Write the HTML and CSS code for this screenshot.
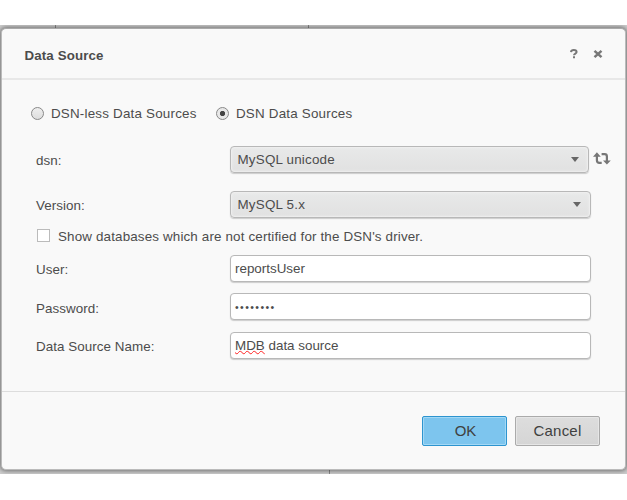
FILE: index.html
```html
<!DOCTYPE html>
<html lang="en">
<head>
<meta charset="utf-8">
<title>Data Source</title>
<link rel="stylesheet" href="styles.css">
</head>
<body>
<div class="backdrop">
  <div class="dialog">
    <header class="header">
      <h1 class="title">Data Source</h1>
      <svg class="help" width="8" height="10" viewBox="0 0 8 10"><path d="M1 3.1C1.2 1.5 2.3 1.1 3.8 1.1C5.5 1.1 6.6 1.8 6.6 3.1C6.6 4.6 4 4.6 4 6.2" fill="none" stroke="#777" stroke-width="2"/><path d="M3 7.3h2v2H3z" fill="#777"/></svg>
      <svg class="close" width="10" height="10" viewBox="0 0 10 10"><path d="M1.5 1.8L8.5 8.2M8.5 1.8L1.5 8.2" stroke="#777" stroke-width="2.5"/></svg>
    </header>
    <main class="content">
      <div class="modes">
        <label class="mode less"><span class="radio"></span><span class="mode-text">DSN-less Data Sources</span></label>
        <label class="mode"><span class="radio on"></span><span class="mode-text">DSN Data Sources</span></label>
      </div>
      <div class="row row-dsn">
        <span class="label">dsn:</span>
        <div class="field select narrow"><span>MySQL unicode</span><i class="arrow"></i></div>
        <svg class="refresh" width="18" height="13" viewBox="0 0 18 13"><g fill="none" stroke="#777" stroke-width="2.2"><path d="M3.9 3v5.2q0 2.6 2.6 2.6h2.2M8.6 2.1h3q2.3 0 2.3 2.3V10"/></g><path d="M0 4.7L3.9.3l3.9 4.4zM10 8.6h7.8l-3.9 4z" fill="#777"/></svg>
      </div>
      <div class="row row-version">
        <span class="label">Version:</span>
        <div class="field select"><span>MySQL 5.x</span><i class="arrow"></i></div>
      </div>
      <label class="check"><span class="box"></span><span class="check-text">Show databases which are not certified for the DSN's driver.</span></label>
      <div class="row row-input">
        <span class="label">User:</span>
        <div class="field"><span>reportsUser</span></div>
      </div>
      <div class="row row-input">
        <span class="label">Password:</span>
        <div class="field"><span class="dots">••••••••</span></div>
      </div>
      <div class="row row-input">
        <span class="label">Data Source Name:</span>
        <div class="field"><span><span class="misspelled">MDB</span> data source</span></div>
      </div>
    </main>
    <footer class="footer">
      <div class="button primary">OK</div>
      <div class="button cancel">Cancel</div>
    </footer>
  </div>
</div>
</body>
</html>
```
FILE: styles.css
```css
* { box-sizing: border-box; }
body {
  margin: 0;
  background: #fff;
  color: #4c4c4c;
  font: 13.4px/16px "Liberation Sans", Arial, sans-serif;
  white-space: nowrap;
}
.backdrop {
  height: 449px;
  margin-top: 25px;
  padding: 3px 1px 4px 1px;
  overflow: hidden;
  background:
    linear-gradient(#888, #888) 55px 0 / 1px 3px no-repeat,
    linear-gradient(#888, #888) 308px 0 / 1px 3px no-repeat,
    linear-gradient(#888, #888) 329px 100% / 1px 4px no-repeat,
    #ccc;
}
.dialog {
  display: flex;
  flex-direction: column;
  height: 442px;
  background: #f9f9f9;
  border: 1px solid #bbb;
  border-top-color: #aaa;
  border-radius: 5px;
  box-shadow: 0 0 4px 1px rgba(0, 0, 0, .45);
}
.header {
  display: flex;
  align-items: center;
  height: 51px;
  padding: 0 22px 0 22.5px;
  border-bottom: 2px solid #e8e8e8;
}
.title { margin: 5px auto 0 0; font-size: 13.3px; font-weight: bold; letter-spacing: .13px; }
.close { margin-left: 15px; }
.content { height: 311px; padding: 26px 0 0 29px; }
.modes { display: flex; height: 16px; }
.mode { display: flex; align-items: center; }
.less { width: 185px; }
.radio {
  width: 13px;
  height: 13px;
  margin: -1px 7px 0 0;
  border: 1.5px solid #888;
  border-radius: 50%;
  background: linear-gradient(#eee, #ddd);
}
.on { background: radial-gradient(circle, #444 0 2.2px, #e8e8e8 3px); }
.mode-text { letter-spacing: .2px; }
.row { display: flex; align-items: center; height: 28px; padding-left: 5px; }
.row-dsn { margin-top: 23px; }
.row-version { margin-top: 17px; }
.row-input { height: 38.6px; }
.label { width: 194px; padding-top: 4px; letter-spacing: .05px; }
.field {
  display: flex;
  align-items: center;
  width: 361px;
  height: 27px;
  padding: 2px 4px 0;
  border: 1px solid #b8b8b8;
  border-radius: 4px;
  background: #fff;
  box-shadow: 0 1px 1px #ccc;
}
.select {
  justify-content: space-between;
  padding: 2px 9px 0 6.5px;
  background: linear-gradient(#e8e9e9, #e1e1e1);
  box-shadow: inset 0 0 2px 1px #f0f0f0, 0 1px 1px #ccc;
  letter-spacing: .2px;
}
.narrow { width: 359px; }
.arrow { margin-top: -1px; border: 4px solid transparent; border-top: 5px solid #666; border-bottom: 0; }
.refresh { margin: -2px 0 0 4px; }
.check { display: flex; align-items: center; height: 17px; margin: 9px 0 5px 6px; }
.box { width: 13px; height: 13px; margin: 0 8px 0 0; border: 1px solid #bbb; background: #fff; }
.check-text { padding-top: 2px; letter-spacing: .15px; }
.dots { margin-top: -2px; font-size: 10.5px; letter-spacing: 1.4px; }
.misspelled { text-decoration: underline wavy #f22 1px; text-underline-offset: 0; text-decoration-skip-ink: none; }
.footer {
  display: flex;
  justify-content: flex-end;
  gap: 8px;
  padding: 24px 25px 0 0;
  border-top: 1px solid #ddd;
}
.button {
  display: flex;
  align-items: center;
  justify-content: center;
  width: 85px;
  height: 30px;
  border: 1px solid #aaa;
  border-radius: 2px;
  background: linear-gradient(#ddd, #d5d5d5);
  box-shadow: inset 0 0 0 1px #e6e6e6;
  color: #404040;
  font-size: 15px;
}
.cancel { letter-spacing: .2px; }
.primary { padding-left: 2px; border-color: #2d94cf; background: #7dc5ee; box-shadow: inset 0 0 0 1px #a3d8f5; }
```
